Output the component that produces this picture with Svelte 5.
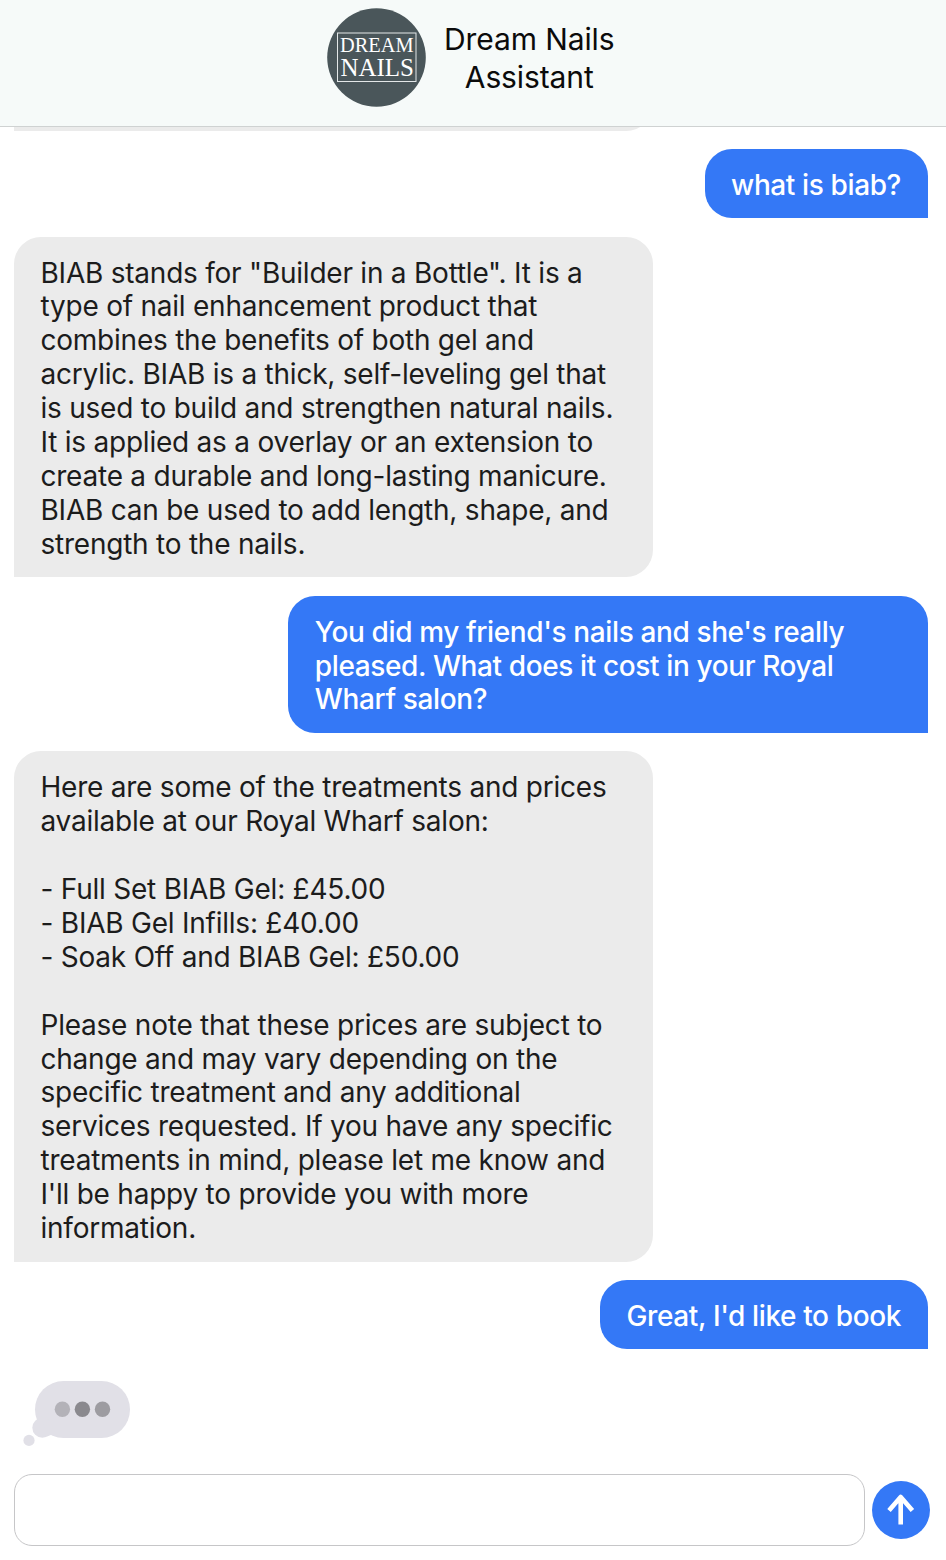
<script lang="ts">
  type Message = { from: 'user' | 'assistant'; text: string };

  const messages: Message[] = [
    { from: 'assistant', text: ' ' },
    { from: 'user', text: 'what is biab?' },
    {
      from: 'assistant',
      text: `BIAB stands for "Builder in a Bottle". It is a
type of nail enhancement product that
combines the benefits of both gel and
acrylic. BIAB is a thick, self-leveling gel that
is used to build and strengthen natural nails.
It is applied as a overlay or an extension to
create a durable and long-lasting manicure.
BIAB can be used to add length, shape, and
strength to the nails.`
    },
    {
      from: 'user',
      text: `You did my friend's nails and she's really
pleased. What does it cost in your Royal
Wharf salon?`
    },
    {
      from: 'assistant',
      text: `Here are some of the treatments and prices
available at our Royal Wharf salon:

- Full Set BIAB Gel: £45.00
- BIAB Gel Infills: £40.00
- Soak Off and BIAB Gel: £50.00

Please note that these prices are subject to
change and may vary depending on the
specific treatment and any additional
services requested. If you have any specific
treatments in mind, please let me know and
I'll be happy to provide you with more
information.`
    },
    { from: 'user', text: "Great, I'd like to book" }
  ];

  let draft = $state('');
</script>

<div class="chat">
  <header>
    <svg class="logo" viewBox="0 0 99 99" role="img" aria-label="Dream Nails">
      <circle cx="49.5" cy="49.5" r="49.3" fill="#4a565a" />
      <rect x="10.5" y="25" width="78.5" height="48.5" fill="none" stroke="#e3e7e8" />
      <text x="13" y="44.4" font-size="20" textLength="73.5" lengthAdjust="spacingAndGlyphs">DREAM</text>
      <text x="13.5" y="68" font-size="24.5" textLength="73.5" lengthAdjust="spacingAndGlyphs">NAILS</text>
    </svg>
    <h1>Dream Nails<br />Assistant</h1>
  </header>

  <main>
    {#each messages as message}
      <p class="bubble {message.from}" class:wide={message.text.includes('\n') || message.text === ' '}>{message.text}</p>
    {/each}
    <svg class="typing" width="120" height="76" viewBox="14 1374 120 76">
      <g fill="#e1e0e7">
        <rect x="35" y="1381" width="95" height="57" rx="28.5" />
        <circle cx="42.3" cy="1427.7" r="10" />
        <path d="M40 1415L56 1433L47 1436.5Z" />
        <circle cx="29" cy="1440.4" r="5.6" />
      </g>
      <circle cx="62.4" cy="1409.3" r="7.7" fill="#b3b2b8" />
      <circle cx="82.4" cy="1409.3" r="7.7" fill="#8a898e" />
      <circle cx="102.5" cy="1409.3" r="7.7" fill="#9d9ca1" />
    </svg>
  </main>

  <form onsubmit={(e) => e.preventDefault()}>
    <input type="text" aria-label="Message" bind:value={draft} />
    <button type="submit" aria-label="Send">
      <svg width="58" height="58" viewBox="0 0 58 58" fill="none" stroke="#fff" stroke-width="4.6">
        <path d="M28.7 43.6V16M17 29.6L28.7 16L40.4 29.6" stroke-linejoin="round" />
      </svg>
    </button>
  </form>
</div>

<style>
  :global(body) {
    margin: 0;
    background: #fff;
  }
  .chat {
    display: flex;
    flex-direction: column;
    height: 1560px;
    overflow: hidden;
    font-family: Inter, 'Liberation Sans', sans-serif;
  }
  header {
    display: flex;
    flex: none;
    justify-content: center;
    gap: 18px;
    box-sizing: border-box;
    height: 127px;
    padding: 8px 4.5px 0 0;
    background: #f6faf9;
    border-bottom: 1.5px solid #cfd2d2;
  }
  .logo {
    width: 99px;
    height: 99px;
  }
  .logo text {
    fill: #fff;
    font-family: 'Liberation Serif', serif;
  }
  h1 {
    margin: 11.5px 0 0;
    font-size: 30px;
    font-weight: 400;
    line-height: 38px;
    letter-spacing: -0.1px;
    text-align: center;
    color: #0b0b0b;
  }
  main {
    display: flex;
    flex: 1;
    flex-direction: column;
    justify-content: flex-end;
    gap: 18.5px;
    min-height: 0;
    padding: 0 18.5px 24px 14px;
    overflow: hidden;
  }
  .bubble {
    flex: none;
    box-sizing: border-box;
    margin: 0;
    padding: 19.8px 26.5px 15.5px;
    font-size: 28px;
    line-height: 33.92px;
    letter-spacing: -0.23px;
    white-space: pre;
  }
  .wide { width: 639.2px; }
  .assistant {
    align-self: flex-start;
    border-radius: 27px 27px 27px 0;
    background: #ebebeb;
    color: #1c1c1c;
  }
  .user {
    align-self: flex-end;
    border-radius: 27px 27px 0 27px;
    background: #3478f6;
    color: #fff;
    font-weight: 450;
    letter-spacing: -0.38px;
  }
  .typing {
    flex: none;
    margin-top: 6.2px;
  }
  form {
    display: flex;
    flex: none;
    align-items: center;
    gap: 7px;
    padding: 0 16px 14px 14px;
  }
  input {
    flex: 1;
    box-sizing: border-box;
    height: 72px;
    padding: 0 20px;
    border: 1px solid #c6c6c8;
    border-radius: 18px;
    outline: none;
    font: inherit;
    font-size: 28px;
  }
  button {
    width: 58px;
    height: 58px;
    padding: 0;
    border: none;
    border-radius: 50%;
    background: #3478f6;
    cursor: pointer;
  }
  button svg { display: block; }
</style>
